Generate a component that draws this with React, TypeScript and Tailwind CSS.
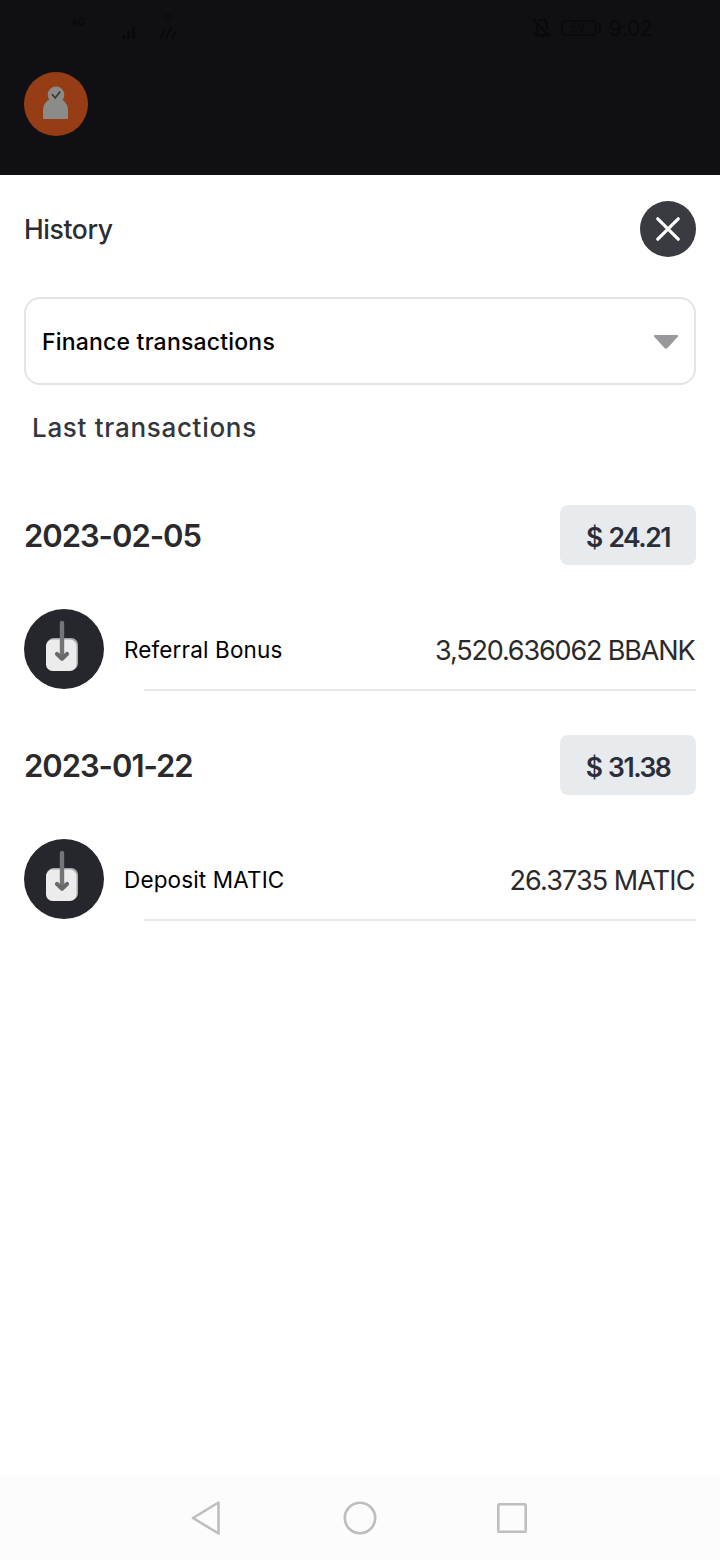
function StatusBar() {
  return (
    <div className="flex h-14 items-center justify-between pr-[68px] pl-[70px] text-[#09090c]">
      <svg width="120" height="32" viewBox="0 0 120 32" fill="currentColor">
        <text x="1" y="14" fontSize="10" fontFamily="Inter, sans-serif" fontWeight="700">4G</text>
        <path d="M6 19l5 4M15 17v7M52 23h3v4h-3zM57 19h3v8h-3zM62 14h3v13h-3z" />
        <path d="M90 27l5-11M96 27l5-11M102 27l4-8" stroke="currentColor" strokeWidth="1.5" />
        <circle cx="98" cy="5" r="3" fill="none" stroke="currentColor" />
      </svg>
      <div className="flex items-center">
        <svg className="mr-2" width="22" height="24" viewBox="0 0 22 24" fill="none" stroke="currentColor" strokeWidth="2">
          <path d="M2 3l17 18M6 8v8l-2 3h13M8 5c4-3 8-1 8 4v5M9 21h4" />
        </svg>
        <svg className="mr-1.5" width="42" height="18" viewBox="0 0 42 18" fill="none" stroke="currentColor" strokeWidth="1.5">
          <rect x="1" y="2" width="34" height="14" rx="3" />
          <path d="M39 4v10" strokeWidth="2" />
          <text x="9" y="13" fontSize="12" fontFamily="Inter, sans-serif" fill="currentColor" stroke="none">69</text>
        </svg>
        <span className="pt-0.5 text-[21px] leading-6 tracking-[-0.5px]">9:02</span>
      </div>
    </div>
  );
}

function DepositIcon() {
  return (
    <svg className="shrink-0" width="80" height="80" viewBox="0 0 80 80">
      <circle cx="40" cy="40" r="40" fill="#26272c" />
      <rect x="23" y="29" width="31" height="32" rx="6.5" fill="#a6a7a9" />
      <rect x="22" y="30.5" width="30.5" height="31.5" rx="6.5" fill="#ececed" />
      <path d="M38 14V49" stroke="#747577" strokeWidth="4.4" strokeLinecap="round" fill="none" />
      <path d="M33 45l5 4.6 5-4.6" stroke="#69696b" strokeWidth="4.2" strokeLinecap="round" strokeLinejoin="round" fill="none" />
    </svg>
  );
}

type Entry = { date: string; total: string; label: string; amount: string; amountTracking: string };

const entries: Entry[] = [
  { date: '2023-02-05', total: '$ 24.21', label: 'Referral Bonus', amount: '3,520.636062 BBANK', amountTracking: 'tracking-[-1.15px]' },
  { date: '2023-01-22', total: '$ 31.38', label: 'Deposit MATIC', amount: '26.3735 MATIC', amountTracking: 'tracking-[-0.9px]' },
];

function Day({ date, total, label, amount, amountTracking }: Entry) {
  return (
    <section className="h-[230px]">
      <div className="flex h-[60px] items-center justify-between">
        <h2 className="pt-[3px] text-[31px] font-semibold tracking-[-1.05px] text-[#2a2a2d]">{date}</h2>
        <div className="flex h-[60px] w-[136px] items-center justify-center rounded-lg bg-[#e8ebee] pt-1.5 text-[26.5px] font-semibold tracking-[-1.5px] text-[#2b2e3a] [word-spacing:1.5px]">
          {total}
        </div>
      </div>
      <div className="mt-11 flex h-20 items-center">
        <DepositIcon />
        <span className="ml-5 pt-0.5 text-[22.5px] tracking-[0.14px] text-black">{label}</span>
        <span className={`mr-[1.5px] ml-auto pt-1 text-[27px] text-[#2a2a2b] ${amountTracking}`}>{amount}</span>
      </div>
      <div className="ml-[120px] h-0.5 bg-[#e9e9ea]" />
    </section>
  );
}

export default function App() {
  return (
    <div className="flex h-[1560px] w-[720px] flex-col bg-white font-['Inter',sans-serif]">
      <header className="h-[175px] bg-[#101014]">
        <StatusBar />
        <svg className="mt-4 ml-6" width="64" height="64" viewBox="0 0 64 64">
          <circle cx="32" cy="32" r="32" fill="#963d16" />
          <g fill="#8b8b89">
            <circle cx="32" cy="22.8" r="8.3" />
            <path d="M19 46V38.5C19 31 24 26.5 31.5 26.5S44 31 44 38.5V46q0 1-1 1H20q-1 0-1-1z" />
          </g>
          <path d="M28 22.3l3.2 3.7 5-6.6" fill="none" stroke="#363838" strokeWidth="1.7" />
        </svg>
      </header>
      <main className="flex-1 px-6 pt-[26px]">
        <div className="flex h-14 items-center justify-between">
          <h1 className="pt-0.5 text-[26.5px] font-medium tracking-[-0.4px] text-[#2c2d31]">History</h1>
          <button aria-label="Close" className="flex size-14 items-center justify-center rounded-full bg-[#3a3b40]">
            <svg width="24" height="24" viewBox="0 0 24 24" stroke="white" strokeWidth="3.2" strokeLinecap="round">
              <path d="M1.8 1.8l20.4 20.4M22.2 1.8L1.8 22.2" />
            </svg>
          </button>
        </div>
        <div className="mt-10 flex h-[88px] items-center justify-between rounded-2xl border-2 border-[#e4e4e4] pr-[15px] pl-4">
          <span className="pt-0.5 text-[23px] font-medium tracking-[0.2px] text-black">Finance transactions</span>
          <svg className="mt-0.5" width="26" height="16" viewBox="0 0 26 16" fill="#99999b">
            <path d="M2 1h22q2 0 .8 1.8L14.5 14q-1.5 1.6-3 0L1.2 2.8Q0 1 2 1z" />
          </svg>
        </div>
        <h2 className="mt-[23px] ml-2 text-[26px] leading-10 font-medium tracking-[0.7px] text-[#34363e]">Last transactions</h2>
        <div className="mt-[57px]">
          {entries.map((e) => (
            <Day key={e.date} {...e} />
          ))}
        </div>
      </main>
      <nav className="flex h-[84px] items-center justify-center bg-[#fcfcfc]">
        <svg width="340" height="40" viewBox="0 0 340 40" fill="none" stroke="#bebebe" strokeWidth="2.6" strokeLinejoin="round">
          <path d="M28.5 4.5v31L3 20z" />
          <circle cx="170" cy="20" r="15.2" />
          <rect x="308.3" y="6.3" width="27.4" height="27.4" rx="1" />
        </svg>
      </nav>
    </div>
  );
}
